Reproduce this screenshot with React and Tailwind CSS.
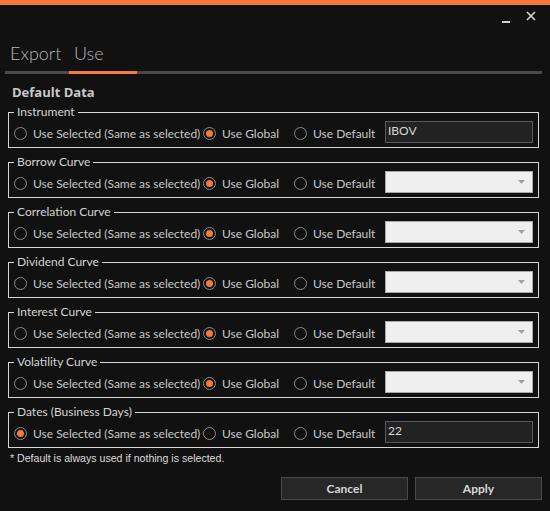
import { useState } from 'react';

const groups = [
  { label: 'Instrument', kind: 'text', value: 'IBOV', pick: 'global' },
  { label: 'Borrow Curve', kind: 'combo', pick: 'global' },
  { label: 'Correlation Curve', kind: 'combo', pick: 'global' },
  { label: 'Dividend Curve', kind: 'combo', pick: 'global' },
  { label: 'Interest Curve', kind: 'combo', pick: 'global' },
  { label: 'Volatility Curve', kind: 'combo', pick: 'global' },
  { label: 'Dates (Business Days)', kind: 'text', value: '22', pick: 'selected' },
];

const Radio = ({ checked, label, width, onClick }) => (
  <button type="button" onClick={onClick} className={`flex items-center gap-[6px] h-full pt-[3px] ${width}`}>
    <span className="w-[13px] h-[13px] rounded-full border border-[#8c8c8c] flex items-center justify-center shrink-0">
      {checked && <span className="w-[7px] h-[7px] rounded-full bg-[#f47b3a]"></span>}
    </span>
    <span className="text-[12px] text-[#c8c8c8] whitespace-nowrap">{label}</span>
  </button>
);

const Group = ({ group }) => {
  const [pick, setPick] = useState(group.pick);
  const [value, setValue] = useState(group.value || '');

  return (
    <fieldset className="border border-[#d6d6d6] ml-[8px] mr-[11px] px-[5px] pb-[4px]">
      <legend className="px-[3px] text-[12px] leading-[16px] text-[#d4d4d4]">{group.label}</legend>
      <div className="flex items-center h-[22px] mt-[1px]">
        <Radio width="w-[189px]" label="Use Selected (Same as selected)" checked={pick === 'selected'} onClick={() => setPick('selected')} />
        <Radio width="w-[91px]" label="Use Global" checked={pick === 'global'} onClick={() => setPick('global')} />
        <Radio width="w-[91px]" label="Use Default" checked={pick === 'default'} onClick={() => setPick('default')} />
        {group.kind === 'text' ? (
          <input
            value={value}
            onChange={(e) => setValue(e.target.value)}
            className="w-[148px] h-[22px] bg-[#222222] border border-[#5a5a5a] text-[12px] text-[#d8d8d8] px-[2px] pb-[4px] outline-none"
          />
        ) : (
          <div className="w-[148px] h-[22px] bg-[#efefef] border border-[#a9a9a9] flex items-center justify-end pr-[7px]">
            <svg width="7" height="4" viewBox="0 0 7 4"><path d="M0 0h7L3.5 4z" fill="#a0a0a0" /></svg>
          </div>
        )}
      </div>
    </fieldset>
  );
};

const App = () => {
  const [tab, setTab] = useState('use');

  return (
    <div className="w-[550px] h-[511px] bg-[#111111] overflow-hidden" style={{ fontFamily: 'Lato, "Open Sans", sans-serif' }}>
      <div className="h-[5px] bg-[#f47b3a]"></div>

      {/* title bar */}
      <div className="h-[28px] flex justify-end items-start pr-[14px] pt-[6px] gap-[16px]">
        <button type="button" className="w-[8px] h-[10px] flex items-end mt-[2px]">
          <span className="block w-[8px] h-[2px] bg-[#d0d0d0]"></span>
        </button>
        <button type="button" className="w-[10px] h-[10px]">
          <svg width="10" height="10" viewBox="0 0 10 10">
            <path d="M1 1L9 9M9 1L1 9" stroke="#d8d8d8" strokeWidth="1.6" />
          </svg>
        </button>
      </div>

      {/* tabs */}
      <div className="flex ml-[5px] mr-[8px] border-b-[3px] border-[#4a4a4a] h-[41px]">
        <button
          type="button"
          onClick={() => setTab('export')}
          className={`w-[64px] pl-[5px] pt-[3px] text-left text-[18px] font-light text-[#b8b8b8] -mb-[3px] border-b-[3px] ${tab === 'export' ? 'border-[#f47b3a]' : 'border-transparent'}`}
        >
          Export
        </button>
        <button
          type="button"
          onClick={() => setTab('use')}
          className={`w-[68px] pl-[5px] pt-[3px] text-left text-[18px] font-light text-[#b8b8b8] -mb-[3px] border-b-[3px] ${tab === 'use' ? 'border-[#f47b3a]' : 'border-transparent'}`}
        >
          Use
        </button>
      </div>

      <div className="pt-[9px]">
        <h2 className="ml-[12px] text-[13px] leading-[18px] font-bold text-[#c8c8c8] mb-[3px]" style={{ fontFamily: '"Open Sans", sans-serif' }}>Default Data</h2>
        <div className="flex flex-col gap-[6px]">
          {groups.map((g) => (
            <Group key={g.label} group={g} />
          ))}
        </div>
        <p className="ml-[10px] mt-[3px] text-[10.6px] leading-[14px] text-[#dcdcdc]" style={{ fontFamily: '"Liberation Sans", Arial, sans-serif' }}>
          * Default is always used if nothing is selected.
        </p>
        <div className="flex justify-end gap-[7px] mr-[8px] mt-[12px]">
          <button type="button" className="w-[127px] h-[23px] bg-[#272727] border border-[#4a4a4a] text-[12px] font-bold text-[#d6d6d6]">Cancel</button>
          <button type="button" className="w-[127px] h-[23px] bg-[#272727] border border-[#4a4a4a] text-[12px] font-bold text-[#d6d6d6]">Apply</button>
        </div>
      </div>
    </div>
  );
};

export default App;
